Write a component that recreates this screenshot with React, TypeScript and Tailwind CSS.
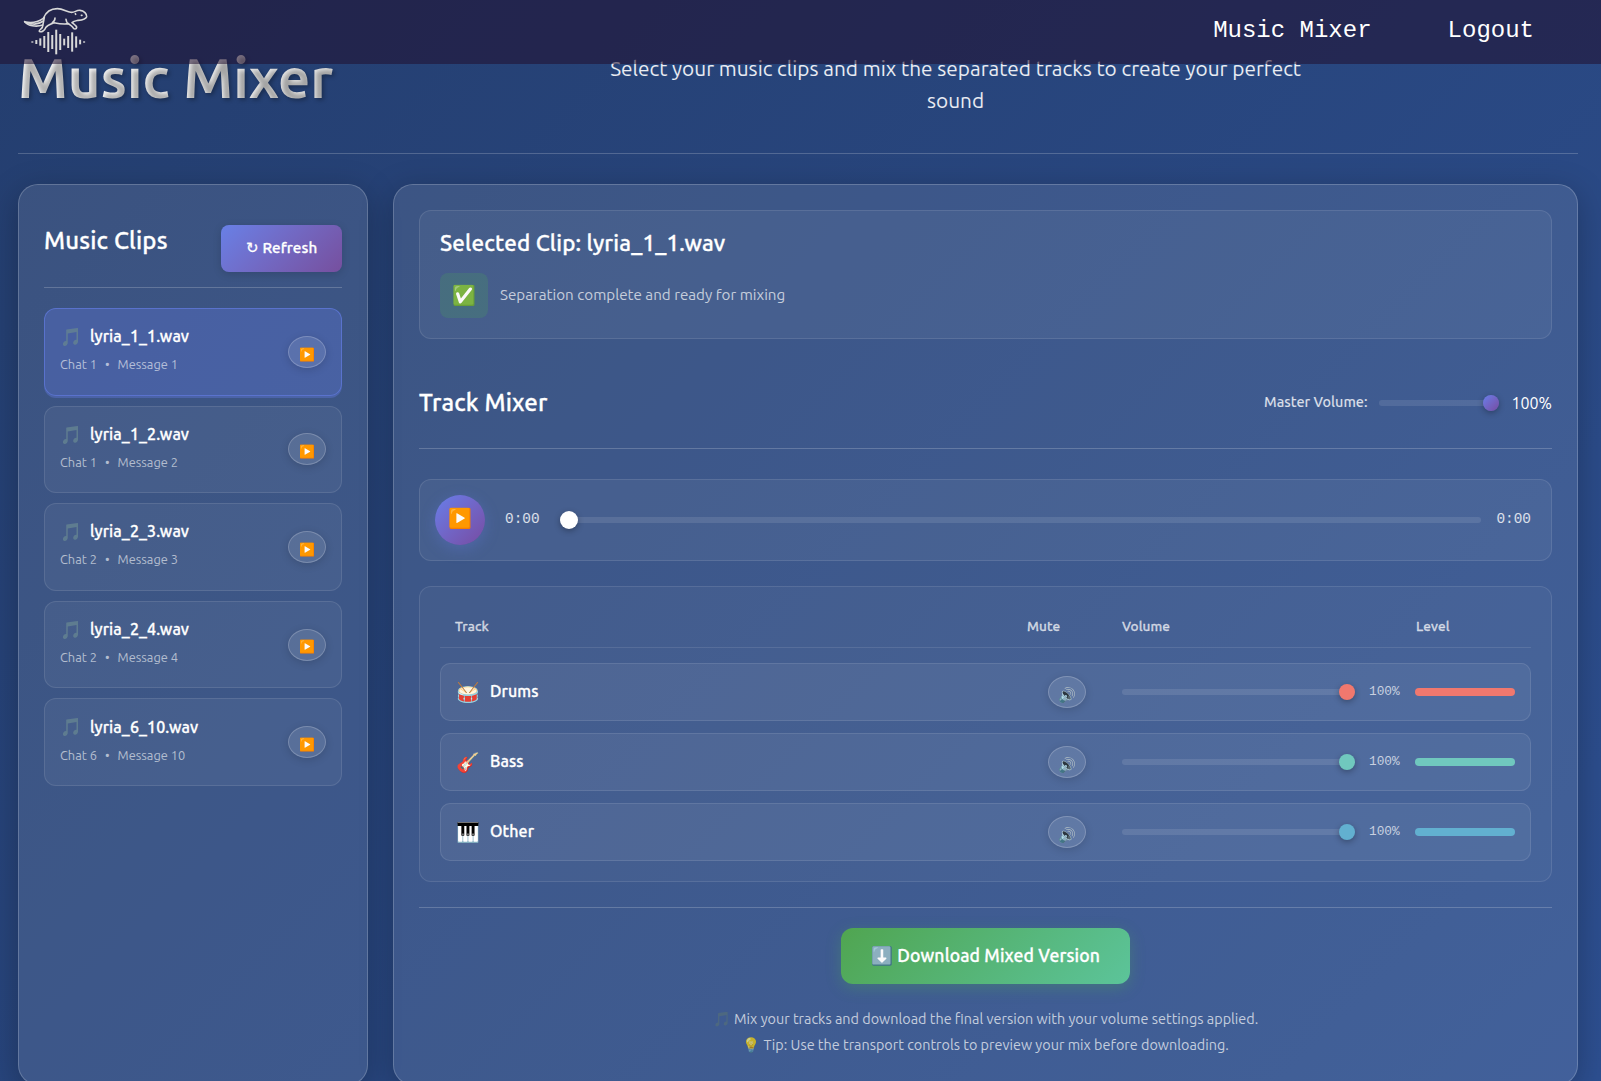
import type { ReactNode } from "react";

type Clip = { name: string; chat: number; message: number; active?: boolean };

const clips: Clip[] = [
  { name: "lyria_1_1.wav", chat: 1, message: 1, active: true },
  { name: "lyria_1_2.wav", chat: 1, message: 2 },
  { name: "lyria_2_3.wav", chat: 2, message: 3 },
  { name: "lyria_2_4.wav", chat: 2, message: 4 },
  { name: "lyria_6_10.wav", chat: 6, message: 10 },
];

const tracks = [
  { icon: "🥁", name: "Drums", color: "bg-[#f1786e]" },
  { icon: "🎸", name: "Bass", color: "bg-[#70c8be]" },
  { icon: "🎹", name: "Other", color: "bg-[#62b0d0]" },
];

const bars = [2, 6, 11, 18, 30, 21, 37, 24, 10, 18, 29, 17, 7, 2];

// Medium weight with a slight extra stroke, shared by headings and labels.
const strong = "font-medium tracking-[0.007em] [-webkit-text-stroke:0.3px_currentColor]";

function Logo() {
  return (
    <svg viewBox="45 0 240 192" className="ml-[15px] h-16 w-20" fill="none" stroke="#d8d8d8" strokeLinecap="round" strokeLinejoin="round">
      <g strokeWidth="4.8">
        <path d="M74 65C92 70 114 66 130 55C137 38 152 26 172 26C188 26 198 34 212 37C224 39 228 30 240 31C252 32 261 42 260 50C258 57 246 60 234 61C226 63 219 65 216 68C222 73 230 76 230 83C229 89 221 88 219 83C216 77 209 75 206 71C192 73 176 71 162 68C152 72 141 76 137 83C134 91 125 98 118 94C116 89 125 87 127 82C129 74 131 62 133 52" />
        <path d="M74 65C84 77 108 82 128 75M84 68C98 74 116 73 130 63" />
        <path d="M165 54C165 62 162 65 157 68M198 58C199 65 200 68 204 71M226 41L227 43M244 46L246 46" />
      </g>
      {bars.map((h, i) => (
        <path key={i} strokeWidth="6" strokeLinecap="butt" d={`M${97 + i * 11.95} ${126 - h}V${126 + h}`} />
      ))}
    </svg>
  );
}

function Navbar() {
  return (
    <nav className="absolute inset-x-0 top-0 z-10 flex h-16 items-center justify-between bg-[#210f2e]/55 pr-[67px]">
      <Logo />
      <div className="flex h-[60px] gap-[76px] font-['Liberation_Mono',monospace] text-2xl leading-[57px] text-white">
        <a>Music Mixer</a>
        <a>Logout</a>
      </div>
    </nav>
  );
}

function RoundButton({ children, className }: { children: ReactNode; className: string }) {
  return (
    <button className={`flex h-8 w-[38px] shrink-0 items-center justify-center rounded-[50%] border border-white/20 bg-white/10 shadow-[0_2px_8px_rgba(0,0,0,0.15)] ${className}`}>
      {children}
    </button>
  );
}

function ClipItem({ clip }: { clip: Clip }) {
  return (
    <li
      className={`flex h-[87.6px] items-center justify-between rounded-xl border px-[15px] ${
        clip.active
          ? "border-[#667eea]/60 bg-[#667eea]/30 shadow-[0_2px_0_rgba(102,126,234,0.35)]"
          : "border-white/10 bg-white/5"
      }`}
    >
      <div className="h-[59px]">
        <div className="flex h-7 items-center gap-2">
          <span className="w-[22px] pt-0.5 text-[17.6px] opacity-80 brightness-120">🎵</span>
          <span className={strong}>{clip.name}</span>
        </div>
        <div className="mt-[2.5px] flex h-6 items-center gap-2 text-[12.8px] text-white/60">
          <span>Chat {clip.chat}</span>
          <span>•</span>
          <span>Message {clip.message}</span>
        </div>
      </div>
      <RoundButton className="pt-[5px] text-[12.8px]">▶️</RoundButton>
    </li>
  );
}

function Sidebar() {
  return (
    <aside className="h-[901px] w-[350px] shrink-0 rounded-[20px] border border-white/20 bg-white/10 px-[25px] pt-10 shadow-[0_8px_32px_rgba(0,0,0,0.25)]">
      <div className="flex h-[63px] items-start justify-between border-b border-white/20">
        <h2 className={`text-2xl leading-8 ${strong}`}>Music Clips</h2>
        <button className={`h-[47px] w-[121px] rounded-lg bg-linear-135 from-[#6880e6] to-[#764f9e] text-[15.2px] shadow-[0_2px_8px_rgba(0,0,0,0.15)] ${strong}`}>
          ↻ Refresh
        </button>
      </div>
      <ul className="mt-5 flex flex-col gap-[10px]">
        {clips.map((c) => (
          <ClipItem key={c.name} clip={c} />
        ))}
      </ul>
    </aside>
  );
}

function TrackRow({ icon, name, color }: { icon: string; name: string; color: string }) {
  return (
    <div className="grid h-[58px] grid-cols-[1fr_80px_293px_100px] items-center rounded-[10px] border border-white/10 bg-white/[0.06] px-[15px]">
      <div className="flex items-center gap-[10px]">
        <span className="w-6 text-[19.2px]">{icon}</span>
        <span className={`pb-0.5 ${strong}`}>{name}</span>
      </div>
      <RoundButton className="ml-[6px] pt-[7px] text-[14.4px]">🔊</RoundButton>
      <div className="flex items-center">
        <div className="flex h-1.5 w-[233px] items-center justify-end rounded-[3px] bg-white/10">
          <div className={`size-4 rounded-full shadow-[0_2px_6px_rgba(0,0,0,0.3)] ${color}`} />
        </div>
        <span className="ml-[14px] font-['Liberation_Mono',monospace] text-[12.8px] text-white/70">100%</span>
      </div>
      <div className={`h-2 rounded ${color}`} />
    </div>
  );
}

function Mixer() {
  return (
    <main className="h-[901px] flex-1 rounded-[20px] border border-white/20 bg-white/10 p-[25px] shadow-[0_8px_32px_rgba(0,0,0,0.25)]">
      <section className="h-[129px] rounded-xl border border-white/10 bg-white/5 px-5 pt-4">
        <h3 className={`text-[22.4px] leading-8 ${strong}`}>Selected Clip: lyria_1_1.wav</h3>
        <div className="mt-[14px] flex items-center gap-3">
          <span className="flex h-[45px] w-12 items-center justify-center rounded-lg bg-[#4caf50]/20 pb-px text-[19.2px]">✅</span>
          <span className="text-[15.2px] text-white/70">Separation complete and ready for mixing</span>
        </div>
      </section>

      <div className="mt-[30px] flex h-20 items-center justify-between border-b border-white/20 pb-[11px]">
        <h2 className={`text-2xl ${strong}`}>Track Mixer</h2>
        <div className="flex items-center">
          <span className="text-[14.4px] font-medium text-white/80">Master Volume:</span>
          <div className="ml-3 flex h-1.5 w-[120px] items-center justify-end rounded-[3px] bg-white/10">
            <div className="size-4 rounded-full bg-linear-135 from-[#667eea] to-[#764ba2] shadow-[0_2px_6px_rgba(0,0,0,0.3)]" />
          </div>
          <span className="ml-3 text-base">100%</span>
        </div>
      </div>

      <div className="mt-[30px] flex h-[82px] items-center rounded-xl border border-white/10 bg-white/5 pr-5 pl-[15px] font-['Liberation_Mono',monospace] text-[14.4px] text-white/80">
        <button className="flex size-[50px] shrink-0 items-center justify-center rounded-full bg-linear-135 from-[#667eea] to-[#764ba2] pb-[3px] font-['Ubuntu','Noto_Sans',sans-serif] text-[19.2px] text-white shadow-[0_4px_15px_rgba(102,126,234,0.3)]">
          ▶️
        </button>
        <span className="ml-5">0:00</span>
        <div className="mr-[15px] ml-5 flex h-1.5 flex-1 items-center rounded-[3px] bg-white/10">
          <div className="size-[18px] rounded-full bg-white shadow-[0_2px_6px_rgba(0,0,0,0.3)]" />
        </div>
        <span>0:00</span>
      </div>

      <section className="mt-[25px] flex h-[296px] flex-col gap-3 rounded-xl border border-white/10 bg-white/[0.03] px-5 pt-5">
        <div className={`mb-[3px] grid h-[41px] grid-cols-[1fr_95px_294px_115px] border-b border-white/10 pt-2 pl-[15px] text-[13.6px] leading-[22px] text-white/70 ${strong}`}>
          <span>Track</span>
          <span>Mute</span>
          <span>Volume</span>
          <span>Level</span>
        </div>
        {tracks.map((t) => (
          <TrackRow key={t.name} {...t} />
        ))}
      </section>

      <footer className="mt-[25px] flex flex-col items-center border-t border-white/20 pt-5">
        <button className={`h-14 w-[289px] rounded-xl bg-linear-135 from-[#50a550] to-[#5cc49a] text-[17.6px] shadow-[0_4px_15px_rgba(76,175,80,0.3)] ${strong}`}>
          ⬇️ Download Mixed Version
        </button>
        <div className="mt-[23px] text-center text-[14.4px] leading-[25.9px] text-white/70">
          <p>🎵 Mix your tracks and download the final version with your volume settings applied.</p>
          <p>💡 Tip: Use the transport controls to preview your mix before downloading.</p>
        </div>
      </footer>
    </main>
  );
}

export default function App() {
  return (
    <div className="relative h-[1081px] overflow-hidden bg-linear-135 from-[#243e6f] to-[#2d4f90] pt-[46px] pr-[23px] pl-[18px] font-['Ubuntu','Noto_Sans',sans-serif] text-white">
      <Navbar />
      <header className="flex h-[108px] border-b border-white/20">
        <h1 className="h-16 bg-linear-45 from-white to-[#e0e0e0] bg-clip-text text-[56px] leading-[64px] font-semibold text-transparent [text-shadow:2px_2px_4px_rgba(0,0,0,0.3)]">
          Music Mixer
        </h1>
        <div className="flex-1 pt-[7px]">
          <p className="mx-auto max-w-[700px] text-center text-[20.8px] leading-8 text-white/90">
            Select your music clips and mix the separated tracks to create your perfect sound
          </p>
        </div>
      </header>
      <div className="mt-[30px] flex gap-[25px]">
        <Sidebar />
        <Mixer />
      </div>
    </div>
  );
}
